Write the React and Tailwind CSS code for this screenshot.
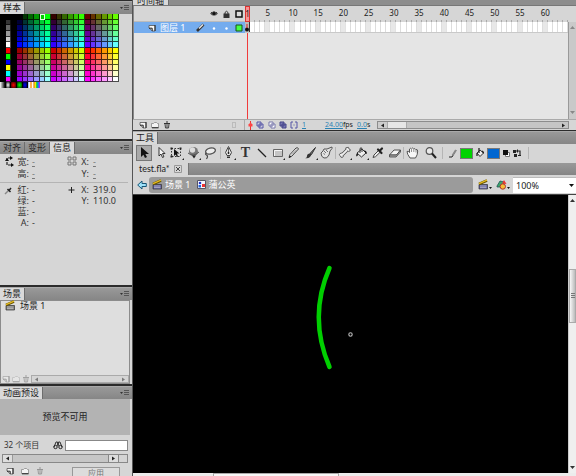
import React from 'react';

const LEVELS = [0, 51, 102, 153, 204, 255];
const SIDE = ['#000', '#333', '#666', '#999', '#ccc', '#fff', '#f00', '#0f0', '#00f', '#ff0', '#0ff', '#f0f'];

const SWATCHES = [];
for (let row = 0; row < 12; row++) {
  SWATCHES.push('#000', SIDE[row], '#000');
  for (let col = 0; col < 18; col++) {
    const red = LEVELS[Math.floor(col / 6) + (row > 5 ? 3 : 0)];
    SWATCHES.push(`rgb(${red},${LEVELS[col % 6]},${LEVELS[row % 6]})`);
  }
}
const GRADIENTS = [
  'linear-gradient(90deg,#fff,#000)',
  'radial-gradient(#fff,#000)',
  'radial-gradient(#f00,#200)',
  'radial-gradient(#0f0,#020)',
  'radial-gradient(#00f,#002)',
];
const FRAMES = Array.from({ length: 64 }, (_, i) => i + 1);

function Svg({ w = 14, h = 14, children, className = '' }) {
  return (
    <svg width={w} height={h} viewBox={`0 0 ${w} ${h}`} fill="none" className={`block shrink-0 ${className}`} aria-hidden="true">
      {children}
    </svg>
  );
}

function TabBar({ tabs, active, menu = true }) {
  return (
    <div className="flex h-[13px] items-stretch overflow-hidden border-t border-[#a9a9a9] bg-linear-to-b from-[#999] to-[#868686]">
      {tabs.map((t) => (
        <button
          key={t}
          type="button"
          className={`flex shrink-0 items-center border-r border-[#6d6d6d] px-[3px] text-[9px] leading-3 ${t === active ? 'bg-[#d9d9d9] text-[#222]' : 'text-[#2a2a2a]'}`}
        >
          {t}
        </button>
      ))}
      {menu && (
        <button type="button" aria-label="菜单" className="mr-[3px] ml-auto">
          <Svg w={9} h={8}>
            <path d="M0 3h3L1.500 5z" fill="#333" />
            <path d="M4 1.500h5M4 3.500h5M4 5.500h5" stroke="#555" />
          </Svg>
        </button>
      )}
    </div>
  );
}

function Clapper({ body = '#55559a' }) {
  return (
    <Svg w={11} h={11}>
      <path d="M1 5.500h8.500v4.500H1z" fill={body} stroke="#333" strokeWidth=".7" />
      <path d="M2 7h6.500M2 8.700h6.500" stroke="#ddd" strokeWidth=".7" />
      <path d="M1 5 9 1.500" stroke="#665300" strokeWidth="2.600" />
      <path d="M1 4.700 9 1.200" stroke="#e5bb22" strokeWidth="1.300" />
    </Svg>
  );
}
const NewPage = () => (
  <Svg w={8} h={8}><path d="M1 1.500h6v5.500H4.500L1 4z" fill="#f8f8f8" stroke="#555" strokeWidth=".8" /><path d="M1 4.200h3.200V7M7 1v6" stroke="#222" /></Svg>
);
const Folder = () => (
  <Svg w={8} h={8}><path d="M.5 2.500h2l1-1h2l1 1h1V6.500h-7z" fill="#f4f4f4" stroke="#888" strokeWidth=".8" /><path d="M1 6.800h6.500" stroke="#222" /></Svg>
);
const Trash = () => (
  <Svg w={8} h={8}><path d="M1 2.500h6M3 1h2" stroke="#333" /><path d="M2 3l.5 4h3L6 3M4 3v4" stroke="#444" /></Svg>
);
const Corner = () => <path d="M14 12v2h-2z" fill="#222" />;
const Bucket = () => (
  <Svg><path d="M2 7l5-4 4 4-4.500 4z" fill="#eee" stroke="#333" /><path d="M5 7V2.500Q6 1 7 2.500V6" stroke="#333" /><path d="M2 7 Q.5 9 1.500 10.500 Q3 10 3 8" fill="#111" /><path d="M9 4q3 1 3 4L10.500 7z" fill="#111" /><Corner /></Svg>
);

const ICONS = {
  select: <Svg><path d="M4 1v10l2.400-2.300L8 12l2-1-1.600-3H12z" fill="#111" /></Svg>,
  sub: <Svg><path d="M5 1.500v8.500l2-2 1.500 3.500 1.400-.6L8.500 7.500H11z" fill="#f8f8f8" stroke="#222" strokeWidth=".9" /></Svg>,
  transform: <Svg><path d="M1.500 2.500h9v8h-9z" stroke="#333" strokeDasharray="1.500 1.500" /><path d="M4 3v7l1.700-1.600 1.300 2.600 1-.6L7 7.500h2.500z" fill="#111" /><path d="M.5 1.500h2v2h-2zM9.500 1.500h2v2h-2zM.5 9.500h2v2h-2z" fill="#222" /><Corner /></Svg>,
  rotate: <Svg><circle cx="6.500" cy="5.500" r="4.500" fill="#777" /><circle cx="5.500" cy="4" r="2.700" fill="#ddd" /><path d="M1 7q5 4.500 11-1" stroke="#555" /><path d="M5 9.500h4L7 12.500z" fill="#222" /><Corner /></Svg>,
  lasso: <Svg><ellipse cx="7.500" cy="5" rx="5" ry="3" transform="rotate(-12 7.500 5)" fill="#ececec" stroke="#555" strokeWidth="1.300" /><path d="M3.500 7q-2 1 0 2t0 4" stroke="#444" strokeWidth="1.200" /></Svg>,
  pen: <Svg><path d="M6.500.5 9.500 6.500 8 9.500H5L3.500 6.500z" fill="#e6e6e6" stroke="#444" /><path d="M6.500 2v4.500" stroke="#444" strokeWidth=".8" /><circle cx="6.500" cy="7" r=".9" fill="#111" /><path d="M5 10.500h3V12H5z" fill="#333" /><Corner /></Svg>,
  line: <Svg><path d="M3 3l8 8" stroke="#222" strokeWidth="1.200" /></Svg>,
  rect: <Svg><path d="M2.500 3.500h9v7h-9z" fill="#c5c5c5" stroke="#666" /><path d="M3.500 10V4.500h7.500" stroke="#f5f5f5" /><Corner /></Svg>,
  pencil: <Svg><path d="M2 11.500 3 8.500 9 2q2-1 2.500 1L5 10z" fill="#ececec" stroke="#444" /><path d="M2 12l.8-2.600 1.500 1.400z" fill="#111" /><path d="M5 8.500 10 3.500" stroke="#888" /></Svg>,
  brush: <Svg><path d="M11.500 1.500 6 7.500l1.500 1z" fill="#777" stroke="#333" /><path d="M6 7.500q-3 0-3 2.500t-2 2q5 1 6.500-3.500z" fill="#333" /><Corner /></Svg>,
  deco: <Svg><path d="M3 5q0-3 4-2l5-2q1 1-2 4l-1 4q-2 4-5 3Q1 11 1 7z" fill="#e2e2e2" stroke="#555" /><path d="M4 5l2 2M6 4l2 2M3.500 7.500l1.500 1" stroke="#666" strokeWidth=".9" /></Svg>,
  bone: <Svg><path d="M4 9 9 4" stroke="#444" strokeWidth="3.200" /><path d="M8 4q-1-3 1-2.500 2-1 2 1.500 2 0 1 2-2 1-3-.5M5 8.500q1 3-1 3-1.500 0-1.500-1.500Q0 9 2 7.500q2-1 3 .5" fill="#eee" stroke="#555" strokeWidth=".9" /><path d="M4 9 9 4" stroke="#eee" strokeWidth="1.800" /><Corner /></Svg>,
  dropper: <Svg><path d="M2 11.500 3 9l5-5 1.700 1.700-5.200 5z" fill="#eee" stroke="#444" /><path d="M7 3.500l3.500 3.500M8.500 5l2.500-2.500" stroke="#222" strokeWidth="2.200" strokeLinecap="round" /></Svg>,
  eraser: <Svg><path d="M1.500 9 6 4h6.500L8.500 9z" fill="#f5f5f5" stroke="#555" /><path d="M1.500 9v2h6.500l4.500-5V4L8.500 9z" fill="#aaa" stroke="#444" strokeWidth=".8" /></Svg>,
  hand: <Svg><path d="M4 12Q1 8 1 5.500q1.200-1 2.500 1V3q1.200-1.500 2 0 1-2 2.200 0 1.300-1 2 .5 1.800-.5 2 1.500 0 4-2.200 7z" fill="#f7f7f7" stroke="#555" /><path d="M5.500 3.500V6M7.800 3.500V6M10 4v2.500" stroke="#777" strokeWidth=".8" /></Svg>,
  zoom: <Svg><circle cx="5.500" cy="5" r="3.300" fill="#e9e9e9" stroke="#555" strokeWidth="1.200" /><path d="M8 7.500l4 4.500" stroke="#222" strokeWidth="2" /></Svg>,
};

function Tool({ name, label, on }) {
  return (
    <button type="button" aria-label={label} className={`flex h-4 w-4 items-center justify-center ${on ? 'border border-[#777] bg-[#a9a9a9]' : ''}`}>
      {name === 'text' ? <span className="font-['Liberation_Serif',serif] text-[14px] leading-4 font-bold text-[#333]">T</span> : name === 'bucket' ? <Bucket /> : ICONS[name]}
    </button>
  );
}

const Divider = () => <div className="h-3 w-px shrink-0 bg-[#b5b5b5]" />;

function ArrowH({ right }) {
  return <Svg w={5} h={7}><path d={right ? 'M1 1.500v4l3-2z' : 'M4 1.500v4L1 3.500z'} fill="#222" /></Svg>;
}

function SwatchPanel() {
  return (
    <section className="h-[139px] shrink-0 border-t border-[#2b2b2b]">
      <TabBar tabs={['样本']} active="样本" />
      <div className="mr-3 grid h-[74px] w-[119px] grid-cols-[repeat(21,minmax(0,1fr))] grid-rows-[repeat(13,minmax(0,1fr))]">
        {SWATCHES.map((c, i) => (
          <div key={i} className={`border-r border-b border-black/70 ${i === 7 ? 'outline -outline-offset-1 outline-[#dfffdf]' : ''}`} style={{ background: c }} />
        ))}
        {GRADIENTS.map((g) => (
          <div key={g} className="border-r border-black" style={{ background: g }} />
        ))}
        <div className="col-span-2 bg-[linear-gradient(90deg,#7af,#fff_12%,#f80_25%,#fff_38%,#d82_50%,#fe0_62%,#0c4_73%,#08f_85%,#d0f)]" />
      </div>
    </section>
  );
}

function Pair({ k, v, link, narrow }) {
  return (
    <div className={`flex items-center ${narrow ? 'gap-1' : 'gap-[3px]'} ${link ? 'h-3 leading-3' : 'h-[11px] leading-[11px]'}`}>
      <dt className={`flex justify-end ${narrow ? 'w-2' : 'w-[15px]'}`}>{k}:</dt>
      <dd className={link ? 'text-[#777] underline' : ''}>{v}</dd>
    </div>
  );
}

function InfoPanel() {
  return (
    <section className="h-[146px] shrink-0 border-t-2 border-[#2b2b2b]">
      <TabBar tabs={['对齐', '变形', '信息']} active="信息" />
      <div className="text-[9px] leading-3 text-[#333]">
        <div className="mr-1 flex border-b border-[#b4b4b4] pt-[2px] pb-[2px]">
          <Svg w={10} h={12} className="ml-1"><path d="M7 2H3v7h5" stroke="#222" strokeWidth="1.200" strokeDasharray="3 1" /><path d="M6 0l3 2-3 2zM1 5l2-3 2 3zM7 7l3 2-3 2z" fill="#111" /></Svg>
          <dl className="w-[53px]"><Pair k="宽" v="-" link /><Pair k="高" v="-" link /></dl>
          <Svg w={10} h={12}><path d="M1 1h3v3H1zM6 1h3v3H6zM1 6h3v3H1zM6 6h3v3H6z" stroke="#777" /></Svg>
          <dl className="ml-1"><Pair k="X" v="-" link narrow /><Pair k="Y" v="-" link narrow /></dl>
        </div>
        <div className="flex pt-px">
          <Svg w={10} h={12} className="ml-1"><path d="M1 10l4-4" stroke="#888" strokeWidth="1.500" /><path d="M3.500 5l3 3M5 6.500 7 4" stroke="#222" strokeWidth="1.500" /></Svg>
          <dl className="w-[53px]"><Pair k="红" v="-" /><Pair k="绿" v="-" /><Pair k="蓝" v="-" /><Pair k="A" v="-" /></dl>
          <Svg w={10} h={12}><path d="M4.500 3v6M1.500 6h6" stroke="#222" /></Svg>
          <dl className="ml-1"><Pair k="X" v="319.0" narrow /><Pair k="Y" v="110.0" narrow /></dl>
        </div>
      </div>
    </section>
  );
}

function ScenePanel() {
  return (
    <section className="flex h-[99px] shrink-0 flex-col border-t-2 border-[#2b2b2b]">
      <TabBar tabs={['场景']} active="场景" />
      <div className="mr-[2px] flex flex-1 flex-col border border-[#8c8c8c] bg-[#dedede]">
        <button type="button" className="flex h-[9px] items-center gap-1 pl-1 text-[9px] leading-[9px] text-[#222]">
          <Clapper body="#777" />场景 1
        </button>
        <div className="mt-auto flex h-2 items-center">
          <div className="flex w-[30px] shrink-0 justify-around opacity-35"><NewPage /><Folder /><Trash /></div>
          <div className="flex h-2 flex-1 items-center justify-between border border-[#aaa] bg-[#d5d5d5] px-[2px]"><span className="opacity-50"><ArrowH /></span><span className="opacity-50"><ArrowH right /></span></div>
        </div>
      </div>
    </section>
  );
}

function PresetPanel() {
  return (
    <section className="min-h-0 flex-1 overflow-hidden border-t-2 border-[#2b2b2b]">
      <TabBar tabs={['动画预设']} active="动画预设" />
      <div className="mr-[2px] flex h-9 items-center justify-center bg-[#b3b3b3] text-[9px] text-[#222]">预览不可用</div>
      <label className="mt-1 flex h-3 items-center pl-1 text-[8px] leading-3 text-[#333]">
        32 个项目
        <Svg w={10} h={9} className="mr-[2px] ml-auto"><path d="M1 6 3 1h1.500L5 5M5 5l.5-4H7l2 5M4 3h2" stroke="#333" /><circle cx="2.500" cy="6" r="1.700" stroke="#222" /><circle cx="7.500" cy="6" r="1.700" stroke="#222" /></Svg>
        <input type="text" className="mr-1 h-[11px] w-[63px] border border-[#888] bg-white px-1 text-[9px]" />
      </label>
      <div className="mt-[3px] mr-1 ml-[2px] flex h-[9px] border border-[#888] bg-[#c3c3c3]">
        <button type="button" aria-label="向左" className="border-r border-[#999] bg-[#ddd] px-[2px]"><ArrowH /></button>
        <div className="flex-1 bg-[#c6c6c6]" />
        <button type="button" aria-label="向右" className="border-x border-[#888] bg-[#ddd] px-[2px]"><ArrowH right /></button>
        <div className="w-2 bg-[#d4d4d4]" />
      </div>
      <div className="mt-1 flex items-start gap-[7px] pl-[6px]">
        <NewPage /><Folder /><span className="opacity-40"><Trash /></span>
        <button type="button" disabled className="mr-3 ml-auto h-3 w-[48px] border border-[#999] bg-[#dcdcdc] text-[8px] leading-[10px] text-[#777]">应用</button>
      </div>
    </section>
  );
}

function Timeline() {
  return (
    <section className="flex h-[130px] shrink-0 flex-col overflow-hidden">
      <div className="flex h-[6px] shrink-0 items-end overflow-hidden border-b border-[#777] bg-[#8d8d8d]">
        <button type="button" className="border-r border-[#6d6d6d] bg-[#d9d9d9] px-1 text-[9px] leading-[9px] text-[#222]">时间轴</button>
      </div>
      <div className="flex min-h-0 flex-1">
        <div className="w-[112px] shrink-0 border-l border-[#888] bg-[#e5e5e5]">
          <div className="flex h-4 items-center justify-end gap-[5px] border-b border-[#bbb] bg-[#d6d6d6] pr-[2px]">
            <Svg w={8} h={8}><path d="M0 3.500Q4-.5 8 3.500 4 8 0 3.500z" fill="#555" /><circle cx="4" cy="3.500" r="1.500" fill="#111" /><path d="M1 2l1 1M4 1v1M7 2 6 3" stroke="#222" strokeWidth=".7" /></Svg>
            <Svg w={7} h={8}><path d="M2 4V2.500Q3.500 0 5 2.500V4" stroke="#333" /><path d="M.5 3.500h6V8h-6z" fill="#333" /></Svg>
            <Svg w={8} h={8}><path d="M1 1h6v6H1z" fill="#ddd" stroke="#111" strokeWidth="1.500" /></Svg>
          </div>
          <div className="flex h-[11px] items-center bg-[#74acee] pl-[14px] text-[9px] leading-[11px] text-white">
            <NewPage /><span className="ml-1">图层 1</span>
            <div className="ml-auto flex items-center gap-[5px] pr-[2px]">
              <Svg w={9} h={9}><path d="M1 8 7.500 1.500" stroke="#333" strokeWidth="2.600" /><path d="M3 5.500 7 1.500" stroke="#eee" strokeWidth="1.200" /></Svg>
              <Svg w={8} h={8}><circle cx="4" cy="4.500" r="1.200" fill="#fff" /></Svg>
              <Svg w={7} h={8}><circle cx="3.500" cy="4.500" r="1.200" fill="#fff" /></Svg>
              <Svg w={8} h={8}><path d="M1 1h6v6H1z" fill="#4f4" stroke="#185218" /></Svg>
            </div>
          </div>
        </div>
        <div className="flex min-w-0 flex-1 flex-col bg-[#e5e5e5]">
          <div className="grid h-4 grid-cols-[repeat(64,minmax(0,1fr))] bg-[#d6d6d6] text-[8px] leading-[14px] text-[#222]">
            {FRAMES.map((n) => (
              <div key={n} className={`flex h-4 flex-col items-center justify-between whitespace-nowrap ${n === 1 ? 'border border-[#d33] bg-[#f89494]' : ''}`}>
                <span className="h-[14px]">{n === 1 || n % 5 === 0 ? n : ''}</span>
                {n > 1 && <i className="h-[2px] w-full shrink-0 border-r border-[#aaa]" />}
              </div>
            ))}
          </div>
          <div className="grid h-[11px] grid-cols-[repeat(64,minmax(0,1fr))] border-b border-[#c9c9c9]">
            {FRAMES.map((n) => (
              <div key={n} className={`border-r ${n === 1 ? 'flex items-end justify-center border-[#333] bg-[#bbb]' : n % 5 === 0 ? 'border-[#e3e3e3] bg-[#e8e8e8]' : 'border-[#ddd] bg-white'}`}>
                {n === 1 && <Svg w={4} h={8}><circle cx="2" cy="5.500" r="2" fill="#111" /><path d="M2 0v4" stroke="#d22" /></Svg>}
              </div>
            ))}
          </div>
          <div className="ml-[2px] w-px flex-1 bg-[#f03c3c]" />
        </div>
        <div className="mt-4 flex w-2 shrink-0 flex-col items-center justify-between border-l border-[#999] bg-[#c9c9c9] py-1">
          <Svg w={5} h={4}><path d="M0 3h5L2.500 0z" fill="#888" /></Svg>
          <Svg w={5} h={4}><path d="M0 0h5L2.500 3z" fill="#888" /></Svg>
        </div>
      </div>
      <div className="flex h-[11px] shrink-0 items-center border-t border-[#aaa] bg-[#d6d6d6] text-[7px] leading-[10px] text-[#2b83b5]">
        <div className="flex w-[112px] shrink-0 items-center gap-1 pl-[6px]">
          <NewPage /><Folder /><Trash />
          <div className="mr-1 ml-auto h-[6px] w-1 border border-[#bbb]" />
          <div className="h-[10px] w-px bg-[#aaa]" />
        </div>
        <div className="flex w-[53px] shrink-0 items-center justify-between pl-[3px]">
          <Svg w={5} h={9}><path d="M2.500 0v9" stroke="#e33" /><path d="M.5 3.500 2.500 1.500l2 2v2h-4z" fill="#f44" /></Svg>
          <Svg w={8} h={8}><path d="M1 1h4v4H1zM3 3h4v4H3z" fill="#ccd" stroke="#5555a5" /></Svg>
          <Svg w={8} h={8}><path d="M1 1h4v4H1zM3 3h4v4H3z" fill="#fff" stroke="#7777aa" /></Svg>
          <Svg w={8} h={8}><path d="M1 1h4v4H1zM3 3h4v4H3z" fill="#7777b5" stroke="#444488" /></Svg>
          <Svg w={8} h={8}><path d="M3 1H1v6h2M5 1h2v6H5M3.500 4h1" stroke="#5555a5" /></Svg>
        </div>
        <span className="ml-1 w-[23px] shrink-0 underline">1</span>
        <span className="w-8 shrink-0 whitespace-nowrap"><span className="underline">24.00</span><span className="text-[#222]">fps</span></span>
        <span className="w-4 shrink-0 whitespace-nowrap"><span className="underline">0.0</span><span className="text-[#222]">s</span></span>
        <div className="mr-[7px] ml-1 flex h-2 flex-1 border border-[#8c8c8c] bg-[#c5c5c5]">
          <button type="button" aria-label="向左" className="bg-[#ccc] px-[2px]"><ArrowH /></button>
          <div className="w-5 border-x border-[#aaa] bg-[#e6e6e6]" />
          <button type="button" aria-label="向右" className="ml-auto px-[2px]"><ArrowH right /></button>
        </div>
      </div>
    </section>
  );
}

function Tools() {
  return (
    <section className="shrink-0 border-t border-[#2b2b2b]">
      <TabBar tabs={['工具']} active="工具" menu={false} />
      <div className="flex h-[19px] items-center bg-[#d6d6d6] pb-px pl-[3px]">
        <div className="flex w-[82px] shrink-0 justify-between">
          <Tool name="select" label="选择工具" on /><Tool name="sub" label="部分选取工具" /><Tool name="transform" label="任意变形工具" /><Tool name="rotate" label="3D 旋转工具" /><Tool name="lasso" label="套索工具" />
        </div>
        <div className="w-[2px]" /><Divider />
        <div className="flex w-[114px] shrink-0 justify-between">
          <Tool name="pen" label="钢笔工具" /><Tool name="text" label="文本工具" /><Tool name="line" label="线条工具" /><Tool name="rect" label="矩形工具" /><Tool name="pencil" label="铅笔工具" /><Tool name="brush" label="刷子工具" /><Tool name="deco" label="Deco 工具" />
        </div>
        <Divider />
        <div className="flex w-[67px] shrink-0 justify-between pl-px">
          <Tool name="bone" label="骨骼工具" /><Tool name="bucket" label="颜料桶工具" /><Tool name="dropper" label="滴管工具" /><Tool name="eraser" label="橡皮擦工具" />
        </div>
        <Divider />
        <div className="mr-[3px] ml-px flex w-[34px] shrink-0 justify-between">
          <Tool name="hand" label="手形工具" /><Tool name="zoom" label="缩放工具" />
        </div>
        <Divider />
        <div className="mr-[6px] ml-[6px] flex shrink-0 items-center gap-[3px]">
          <Svg w={8} h={10}><path d="M0 9h3L7 2" stroke="#222" /><path d="M3.500 7.500 7 2" stroke="#888" strokeWidth="2" /></Svg>
          <button type="button" aria-label="笔触颜色" className="h-[11px] w-[13px] border border-[#777] bg-[#00d200]" />
          <Svg w={8} h={10}><path d="M1 5l3-3 3.500 3L4 8.500z" fill="#eee" stroke="#333" /><path d="M3 5V0M1 5v3M6 3l2 2" stroke="#222" strokeWidth="1.300" /></Svg>
          <button type="button" aria-label="填充颜色" className="h-[11px] w-[13px] border border-[#777] bg-[#0066d0]" />
          <Svg w={7} h={9}><path d="M2.500 3.500h4v4h-4z" fill="#fff" stroke="#777" /><path d="M0 1h5v5H0z" fill="#111" /></Svg>
          <Svg w={9} h={9}><path d="M0 1h3v3H0zM1 5h3v3H1z" fill="#222" /><path d="M5 2h2v4M5 6.500h3" stroke="#222" strokeWidth="1.200" /><path d="M5 0v4L3 2z" fill="#222" /></Svg>
        </div>
        <Divider />
      </div>
    </section>
  );
}

function EditBar() {
  return (
    <nav className="flex h-5 shrink-0 items-center border-b border-[#444] bg-[#d6d6d6] pl-1">
      <button type="button" aria-label="返回" className="mr-[2px]">
        <Svg w={10} h={10}><path d="M.7 5 5 1v2.500h4.300v3H5V9z" fill="#9ee2fa" stroke="#175777" /></Svg>
      </button>
      <div className="flex h-4 flex-1 items-center rounded-[3px] bg-[#9b9b9b] pl-[3px] text-[9px] leading-4 text-white">
        <button type="button" className="flex items-center gap-[2px]"><Clapper />场景 1</button>
        <button type="button" className="ml-[6px] flex items-center gap-[3px]">
          <Svg w={9} h={9}><path d="M.5.5h8v8h-8z" fill="#f5f8ff" stroke="#556" /><circle cx="3" cy="3" r="1.300" fill="#23c" /><path d="M5 4h3v3H5z" fill="#e33" /><path d="M1.500 5h2.500v2.500H1.500z" fill="#26d" /></Svg>
          蒲公英
        </button>
      </div>
      <button type="button" aria-label="编辑场景" className="ml-[5px] flex items-end"><Clapper /><Svg w={3} h={3}><path d="M0 0h3L1.500 2z" fill="#111" /></Svg></button>
      <button type="button" aria-label="编辑元件" className="ml-1 flex items-end">
        <Svg w={11} h={11}><path d="M1 7 4 2l4 1v5H1z" fill="#3ba66c" stroke="#255" strokeWidth=".8" /><path d="M6 4.500 8 1l2.500 4z" fill="#e33" /><circle cx="6.800" cy="7.500" r="2.700" fill="#f6bd35" stroke="#a33" /></Svg>
        <Svg w={3} h={3}><path d="M0 0h3L1.500 2z" fill="#111" /></Svg>
      </button>
      <div className="relative ml-[3px] h-4 w-[63px]">
        <select aria-label="缩放" className="block h-4 w-full appearance-none border-t border-[#bbb] bg-white pl-[3px] text-[9px] leading-[15px] text-[#222]">
          <option>100%</option>
        </select>
        <Svg w={5} h={3} className="pointer-events-none absolute top-[7px] right-[2px]"><path d="M0 0h5L2.500 3z" fill="#111" /></Svg>
      </div>
    </nav>
  );
}

export default function App() {
  return (
    <div className="flex h-screen overflow-hidden bg-[#d6d6d6] font-['Noto_Sans','Noto_Sans_CJK_SC',sans-serif]">
      <aside className="flex w-[133px] shrink-0 flex-col border-r border-[#555]">
        <SwatchPanel />
        <InfoPanel />
        <ScenePanel />
        <PresetPanel />
      </aside>
      <main className="flex min-w-0 flex-1 flex-col">
        <Timeline />
        <Tools />
        <div className="flex h-3 shrink-0 items-stretch bg-linear-to-b from-[#999] to-[#858585]">
          <div className="flex items-center gap-1 border-r border-[#777] bg-[#d6d6d6] pr-[6px] pl-[6px] font-['Lato',sans-serif] text-[9px] leading-3 text-[#222]">
            test.fla*
            <button type="button" aria-label="关闭"><Svg w={8} h={8}><path d="M.5.5h7v7h-7z" stroke="#999" /><path d="M2 2l4 4M6 2 2 6" stroke="#444" /></Svg></button>
          </div>
        </div>
        <EditBar />
        <div className="flex min-h-0 flex-1">
          <div className="min-w-0 flex-1 bg-black">
            <svg className="block h-full w-full" fill="none" aria-hidden="true">
              <path d="M196.500 73Q175 122 196.500 172" stroke="#00cf00" strokeWidth="4.500" strokeLinecap="round" />
              <circle cx="217.500" cy="139.500" r="1.700" stroke="#bbb" strokeWidth="1.100" />
            </svg>
          </div>
          <div className="flex w-2 shrink-0 flex-col items-center border-l border-[#ccc] bg-[#efefef]">
            <Svg w={5} h={3} className="mt-1"><path d="M0 3h5L2.500 0z" fill="#333" /></Svg>
            <div className="mt-[67px] flex h-[54px] w-full items-center justify-center border border-[#aaa] bg-linear-to-r from-[#f8f8f8] to-[#bbb]">
              <Svg w={4} h={6}><path d="M0 .5h4M0 2.500h4M0 4.500h4" stroke="#777" /></Svg>
            </div>
            <Svg w={5} h={3} className="mt-auto mb-1"><path d="M0 0h5L2.500 3z" fill="#333" /></Svg>
          </div>
        </div>
        <div className="h-[3px] shrink-0 bg-[#ececec] pl-20">
          <div className="h-[3px] w-[126px] border-x border-t border-[#aaa] bg-[#f7f7f7]" />
        </div>
      </main>
    </div>
  );
}
